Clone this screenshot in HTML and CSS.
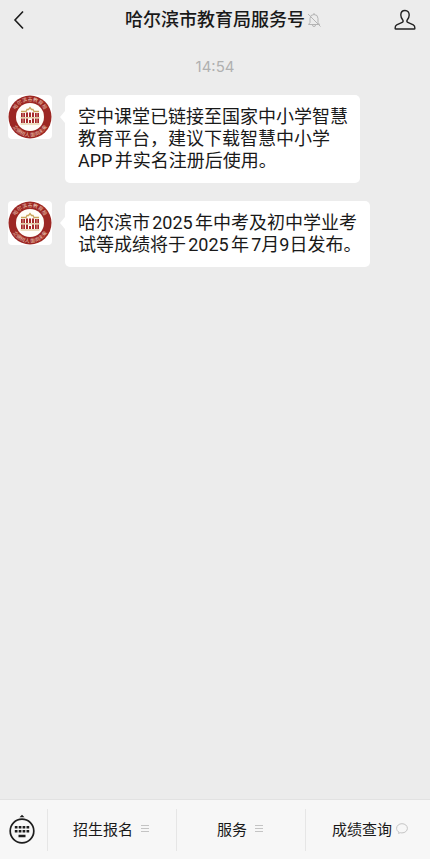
FILE: index.html
```html
<!DOCTYPE html>
<html lang="zh-CN">
<head>
<meta charset="utf-8">
<meta name="viewport" content="width=device-width, initial-scale=1">
<title>哈尔滨市教育局服务号</title>
<link rel="stylesheet" href="styles.css">
</head>
<body>
<svg class="defs" aria-hidden="true">
  <defs>
    <path id="arc-top" d="M6 22a16 16 0 0 1 32 0"/>
    <path id="arc-bottom" d="M2.300 22a19.700 19.700 0 0 0 39.400 0"/>
    <symbol id="seal" viewBox="0 0 44 44">
      <circle cx="22" cy="22" r="21.500" fill="#9c2723"/>
      <circle cx="22" cy="22" r="14" fill="#fffdf8"/>
      <text class="seal-text"><textPath href="#arc-top" startOffset="50%" text-anchor="middle">哈尔滨市教育局</textPath></text>
      <text class="seal-text"><textPath href="#arc-bottom" startOffset="50%" text-anchor="middle">立德树人 面向未来</textPath></text>
      <path d="M13 16.500h5l1-2h1.500l1.500-2 1.500 2H25l1 2h5" fill="none" stroke="#c9a45a" stroke-width="1.300"/>
      <path d="M13 18h4v4h-4zM18 17.500h2v4.500h-2zM21 17.500h2v4.500h-2zM24 17.500h2v4.500h-2zM27 18h4v4h-4zM13 23.500h4V28h-4zM18 23.500h2V28h-2zM24 23.500h2V28h-2zM27 23.500h4V28h-4zM21 25h2v3h-2z" fill="#a52a2a"/>
      <path d="M15 18v10M29 18v10" stroke="#f4dfd0" stroke-width=".6"/>
      <path d="M12.500 22.800h19M12.500 29h19" stroke="#d0ae6c" stroke-width=".8"/>
    </symbol>
  </defs>
</svg>
<div class="app">
  <header class="topbar">
    <button class="icon-button back" aria-label="返回">
      <svg width="12" height="20" viewBox="0 0 12 20"><path d="M10 1.500 2 10l8 8.500" fill="none" stroke="#1c1c1c" stroke-width="1.600"/></svg>
    </button>
    <h1 class="title">哈尔滨市教育局服务号
      <svg class="mute" width="14" height="16" viewBox="0 0 14 16" fill="none" stroke="#b4b4b4"><path d="M1.500 12.500h11L11 10.500V6.500a4 4 0 0 0-8 0v4zM5.500 13a1.500 1.500 0 0 0 3 0M7 2.500V1M1 2l12.500 12.500"/></svg>
    </h1>
    <button class="icon-button profile" aria-label="账号主页">
      <svg width="22" height="22" viewBox="0 0 22 22"><path d="M11 1.500C8.300 1.500 6.800 3.400 6.800 6c0 2.200.9 3.800 2.100 5.200.5.800.2 1.800-.7 2.200l-5.500 2.400c-1.200.6-1.600 1.400-1.600 3.400q0 .8.800.8h18.200q.8 0 .8-.8c0-2-.4-2.800-1.600-3.400l-5.500-2.400c-.9-.4-1.200-1.400-.7-2.200 1.200-1.400 2.100-3 2.100-5.200 0-2.600-1.500-4.500-4.200-4.500z" fill="none" stroke="#222" stroke-width="1.400" stroke-linejoin="round"/></svg>
    </button>
  </header>
  <main class="chat">
    <time class="time">14:54</time>
    <article class="message">
      <svg class="avatar" role="img" aria-label="哈尔滨市教育局"><use href="#seal"/></svg>
      <p class="bubble">空中课堂已链接至国家中小学智慧<br>教育平台，建议下载智慧中小学<br>APP并实名注册后使用。</p>
    </article>
    <article class="message">
      <svg class="avatar" role="img" aria-label="哈尔滨市教育局"><use href="#seal"/></svg>
      <p class="bubble">哈尔滨市2025年中考及初中学业考<br>试等成绩将于2025年7<span class="tight">月9日</span>发布。</p>
    </article>
  </main>
  <footer class="menu">
    <button class="keyboard" aria-label="切换键盘">
      <svg width="28" height="32" viewBox="0 0 28 32"><circle cx="14" cy="18" r="11.800" fill="none" stroke="#1d1d1d" stroke-width="1.700"/><path d="m11.500 4.200 2.500-2.500 2.500 2.500zM6.800 13h2.700v2.600H6.800zM10.700 13h2.700v2.600h-2.700zM14.600 13h2.700v2.600h-2.700zM18.500 13h2.700v2.600h-2.700zM6.800 17h2.700v2.600H6.800zM10.700 17h2.700v2.600h-2.700zM14.600 17h2.700v2.600h-2.700zM18.500 17h2.700v2.600h-2.700zM10.500 21.800h7v2.500h-7z" fill="#1d1d1d"/></svg>
    </button>
    <button class="item">招生报名<svg width="8" height="8" viewBox="0 0 8 8"><path d="M0 .5h8M0 3.500h8M0 6.500h8" stroke="#c4c4c4"/></svg></button>
    <button class="item">服务<svg width="8" height="8" viewBox="0 0 8 8"><path d="M0 .5h8M0 3.500h8M0 6.500h8" stroke="#c4c4c4"/></svg></button>
    <button class="item reply">成绩查询<svg width="12" height="11" viewBox="0 0 12 11"><path d="M3 9.200C1.500 8.400.6 7 .6 5.300.6 2.700 3 .7 6 .7s5.400 2 5.400 4.600S9 9.900 6 9.900q-.9 0-1.700-.2L2.500 10.400z" fill="none" stroke="#c4c4c4"/></svg></button>
  </footer>
</div>
</body>
</html>
```
FILE: styles.css
```css
* {
  box-sizing: border-box;
}

body {
  margin: 0;
  background: #ececec;
  color: #191919;
  font-family: Roboto, "Noto Sans CJK SC", sans-serif;
}

button {
  padding: 0;
  border: 0;
  background: none;
  color: inherit;
  font: inherit;
}

svg {
  display: block;
  flex: none;
}

.defs {
  position: absolute;
  width: 0;
  height: 0;
}

.app {
  display: flex;
  flex-direction: column;
  min-height: 100vh;
}

.topbar {
  display: grid;
  grid-template-columns: 48px 1fr 48px;
  align-items: center;
  height: 40px;
}

.icon-button {
  display: flex;
  align-items: center;
  height: 40px;
}

.back {
  padding-left: 13px;
}

.profile {
  justify-content: flex-end;
  padding-right: 14px;
}

.title {
  display: flex;
  align-items: center;
  justify-content: center;
  gap: 2px;
  margin: 0;
  padding-left: 16px;
  font-size: 18px;
  font-weight: 500;
  line-height: 24px;
  white-space: nowrap;
}

.chat {
  display: flex;
  flex: 1;
  flex-direction: column;
  gap: 18px;
  padding: 17px 8px;
}

.time {
  color: #b0b0b0;
  font-family: Inter, sans-serif;
  font-size: 15px;
  line-height: 20px;
  text-align: center;
}

.message {
  display: flex;
  align-items: flex-start;
  gap: 13px;
}

.avatar {
  width: 44px;
  height: 44px;
  border-radius: 4px;
  background: #fff;
}

.seal-text {
  fill: #ecc9b8;
  font-size: 5px;
}

.bubble {
  position: relative;
  max-width: 305px;
  margin: 0;
  padding: 11px 12px 11px 13px;
  border-radius: 5px;
  background: #fff;
  font-size: 18px;
  line-height: 22px;
  text-autospace: normal;
  white-space: nowrap;
}

.bubble::before {
  position: absolute;
  top: 16px;
  left: -5px;
  border-top: 6px solid transparent;
  border-right: 5px solid #fff;
  border-bottom: 6px solid transparent;
  content: "";
}

.tight {
  text-autospace: no-autospace;
}

.menu {
  display: grid;
  grid-template-columns: 47px 129fr 129fr 125fr;
  align-items: center;
  height: 60px;
  border-top: 1px solid #e2e2e2;
  background: #f7f7f7;
  font-size: 15px;
}

.keyboard {
  display: flex;
  justify-content: center;
  padding: 0 4px 2px 0;
}

.item {
  display: flex;
  align-items: center;
  justify-content: center;
  gap: 8px;
  height: 42px;
  padding: 0 2px 2px 0;
  border-left: 1px solid #e6e6e6;
}

.reply {
  gap: 4px;
  padding: 0 0 2px 4px;
}
```
